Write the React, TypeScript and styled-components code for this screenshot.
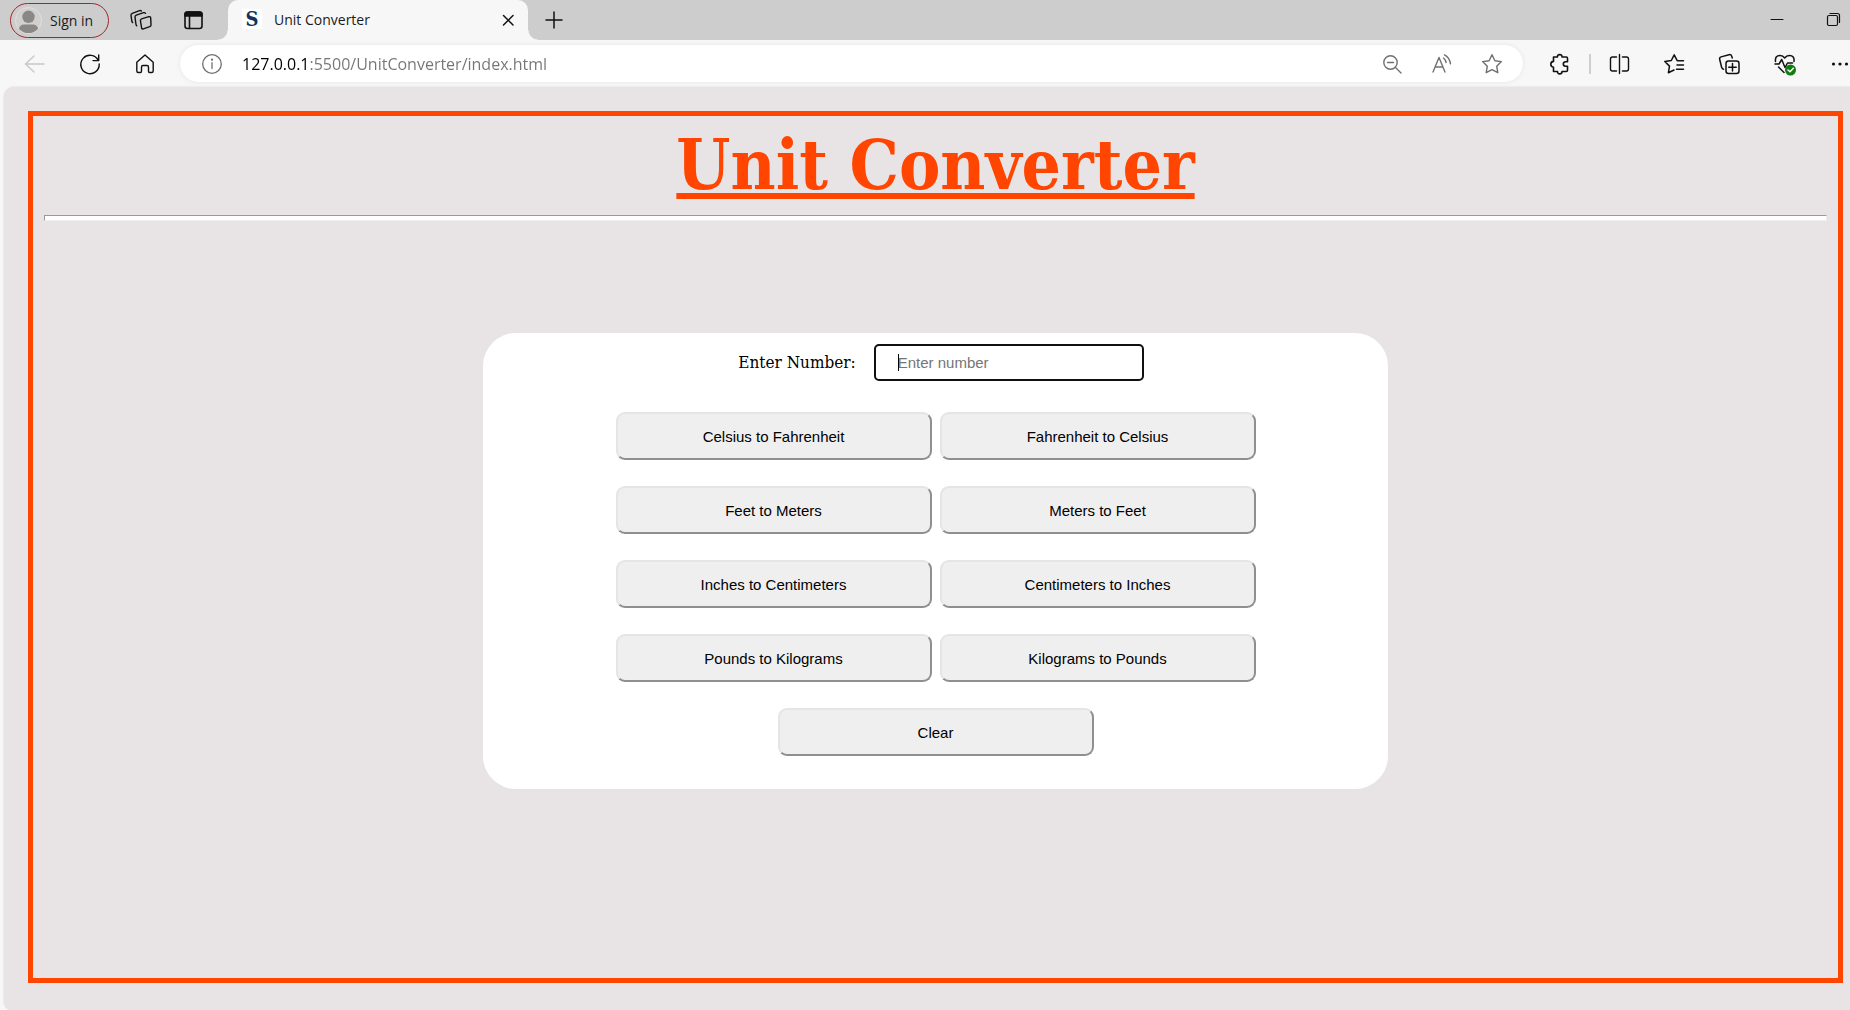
import React, { useState } from "react";
import styled, { createGlobalStyle } from "styled-components";

const GlobalStyle = createGlobalStyle`
  * { box-sizing: border-box; }
  body { margin: 0; background: #f7f7f7; font-family: "Open Sans", "Noto Sans", sans-serif; }
`;

const Browser = styled.div`
  display: flex;
  flex-direction: column;
  min-height: 100vh;
  overflow: hidden;
`;

const TabStrip = styled.header`
  display: flex;
  align-items: center;
  height: 40px;
  padding-left: 10px;
  background: #cdcdcd;
`;

const ProfileButton = styled.button`
  display: flex;
  align-items: center;
  gap: 8px;
  width: 99px;
  height: 35px;
  margin-right: 6px;
  padding: 0 0 0 4px;
  border: 1px solid #a4262c;
  border-radius: 18px;
  background: transparent;
  color: #1b1b1b;
  font-family: inherit;
  font-size: 14px;
  white-space: nowrap;
`;

const IconButton = styled.button<{ $width: number; $tone?: string; $end?: number }>`
  display: flex;
  flex: none;
  align-items: center;
  justify-content: ${(p) => (p.$end === undefined ? "center" : "flex-end")};
  width: ${(p) => p.$width}px;
  height: 36px;
  padding: 0 ${(p) => p.$end ?? 0}px 0 0;
  border: 0;
  background: transparent;
  color: ${(p) => p.$tone ?? "#111"};
`;

const Tab = styled.div`
  position: relative;
  display: flex;
  align-items: center;
  width: 300px;
  height: 40px;
  margin-left: 9px;
  padding: 0 8px 2px 14px;
  border-radius: 10px 10px 0 0;
  background: #f7f7f7;
  color: #1b1b1b;
  font-size: 14px;

  &::before,
  &::after {
    content: "";
    position: absolute;
    bottom: 0;
    width: 10px;
    height: 10px;
  }
  &::before {
    right: 100%;
    background: radial-gradient(circle at 0 0, #cdcdcd 9px, #f7f7f7 10px);
  }
  &::after {
    left: 100%;
    background: radial-gradient(circle at 100% 0, #cdcdcd 9px, #f7f7f7 10px);
  }
`;

const Favicon = styled.span`
  width: 20px;
  height: 20px;
  margin-right: 12px;
  background: #fff;
  color: #12355b;
  font: bold 20px/20px "DejaVu Serif Condensed", "DejaVu Serif", serif;
  text-align: center;
`;

const TabTitle = styled.span`
  flex: 1;
  white-space: nowrap;
`;

const Spacer = styled.div`
  flex: 1;
`;

const Toolbar = styled.nav`
  display: flex;
  align-items: center;
  height: 47px;
  padding-left: 7px;
`;

const AddressBar = styled.div`
  display: flex;
  flex: 1;
  align-items: center;
  height: 37px;
  margin: 0 9px 0 8px;
  padding: 0 6px 0 20px;
  border-radius: 19px;
  background: #fff;
  box-shadow: 0 0 5px rgba(0, 0, 0, 0.08);
  color: #707070;
`;

const AddressInput = styled.input`
  flex: 1;
  min-width: 0;
  height: 30px;
  margin-left: 18px;
  padding: 0;
  border: 0;
  outline: 0;
  background: linear-gradient(to right, #000 67px, #757575 67px);
  background-clip: text;
  -webkit-text-fill-color: transparent;
  font-family: inherit;
  font-size: 16px;
`;

const Divider = styled.span`
  width: 2px;
  height: 20px;
  margin: 0 0 0 2px;
  background: #cfcfcf;
`;

const Page = styled.main`
  display: flex;
  flex: 1;
  flex-direction: column;
  margin-left: 4px;
  padding: 24px 7px 27px 24px;
  border-radius: 10px 0 0 8px;
  background: #e8e4e5;
  box-shadow: 0 0 2px rgba(0, 0, 0, 0.15);
`;

const Frame = styled.div`
  display: flex;
  flex: 1;
  flex-direction: column;
  align-items: center;
  padding: 11px;
  border: 5px solid #ff4500;
`;

const Title = styled.h1`
  margin: 0;
  color: #ff4500;
  font: bold 69px/76px Georgia, "DejaVu Serif Condensed", "DejaVu Serif", serif;
  text-decoration: underline;
  text-decoration-thickness: 6px;
  text-underline-offset: 4px;
  text-decoration-skip-ink: none;
`;

const Rule = styled.hr`
  align-self: stretch;
  height: 6px;
  margin: 12px 0 112px;
  border: 1px solid #eee;
  border-top-color: #999;
  border-left-color: #999;
  background: #fff;
`;

const Card = styled.form`
  display: flex;
  flex-direction: column;
  align-items: center;
  width: 100%;
  max-width: 905px;
  padding: 11px 0 33px;
  border-radius: 33px;
  background: #fff;
`;

const Field = styled.div`
  display: flex;
  align-items: center;
  gap: 18px;
  margin-bottom: 31px;
  padding-left: 11px;
`;

const FieldLabel = styled.label`
  padding-bottom: 2px;
  color: #000;
  font: 17px/24px Georgia, "DejaVu Serif Condensed", "DejaVu Serif", serif;
`;

const InputWrap = styled.div<{ $caret: boolean }>`
  position: relative;
  display: flex;

  &::after {
    content: "";
    position: absolute;
    top: 10px;
    left: 24px;
    width: 1px;
    height: 17px;
    background: ${(p) => (p.$caret ? "#000" : "transparent")};
  }
`;

const NumberInput = styled.input`
  width: 270px;
  height: 37px;
  padding: 0 22px;
  border: 2px solid #101010;
  border-radius: 5px;
  outline: 0;
  background: #fff;
  font: 15px "Liberation Sans", Arial, sans-serif;

  &::placeholder {
    color: #757575;
  }
`;

const Buttons = styled.div`
  display: flex;
  flex-wrap: wrap;
  justify-content: center;
  gap: 26px 8px;
  max-width: 640px;
`;

const ConvertButton = styled.button`
  width: 316px;
  height: 48px;
  border: 2px solid;
  border-color: #e5e5e5 #8f8f8f #8f8f8f #e5e5e5;
  border-radius: 9px;
  background: #efefef;
  color: #000;
  font: 15px "Liberation Sans", Arial, sans-serif;
`;

const Svg = ({ children, size = 24, width = 1.4 }: { children: React.ReactNode; size?: number; width?: number }) => (
  <svg
    width={size}
    height={size}
    viewBox={`0 0 ${size} ${size}`}
    fill="none"
    stroke="currentColor"
    strokeWidth={width}
    strokeLinecap="round"
    strokeLinejoin="round"
    aria-hidden="true"
  >
    {children}
  </svg>
);

const Avatar = () => (
  <svg width="27" height="27" viewBox="0 0 27 27" aria-hidden="true">
    <defs>
      <clipPath id="avatarClip">
        <circle cx="13.500" cy="13.500" r="12.600" />
      </clipPath>
    </defs>
    <circle cx="13.500" cy="13.500" r="13" fill="#d2d0ce" stroke="#e2e0de" />
    <g clipPath="url(#avatarClip)" fill="#8a8886">
      <circle cx="13.500" cy="9.800" r="6.200" />
      <path d="M3.500 22.500Q5 17.500 9 17.500h9q4 0 5.500 5L20 27H7z" />
    </g>
  </svg>
);

const starPath = "M12 2.700l2.900 6 6.500.9-4.700 4.600 1.100 6.500-5.800-3.100-5.800 3.100 1.100-6.500L2.600 9.600l6.500-.9z";

const conversions = [
  "Celsius to Fahrenheit",
  "Fahrenheit to Celsius",
  "Feet to Meters",
  "Meters to Feet",
  "Inches to Centimeters",
  "Centimeters to Inches",
  "Pounds to Kilograms",
  "Kilograms to Pounds",
  "Clear",
];

export default function App() {
  const [value, setValue] = useState("");

  return (
    <Browser>
      <GlobalStyle />
      <TabStrip>
        <ProfileButton>
          <Avatar />
          Sign in
        </ProfileButton>
        <IconButton $width={52} aria-label="Workspaces">
          <Svg>
            <path d="M12.600 10.900l7.300-2.200q1.700-.4 1.800 1.200l.3 7q0 1.300-1.300 1.700l-6.300 2.300q-1.600.5-1.800-1l-1.200-7.200q-.1-1.400 1.200-1.800z" />
            <path d="M7.700 17.800Q7 17 6.900 16L6 9.200q-.1-1.600 1.300-2.100l7.200-2.400q1.300-.4 2 .6" />
            <path d="M3.700 14.600Q3 14 2.800 13L2 7.300q-.1-1.500 1.300-2l7.200-2.600q1.100-.4 1.900.3" />
          </Svg>
        </IconButton>
        <IconButton $width={52} aria-label="Tab actions">
          <Svg width={1.6}>
            <rect x="4" y="4" width="17" height="16.500" rx="2.500" />
            <path d="M4 8V6.500Q4 4 6.500 4h12Q21 4 21 6.500V8z" fill="currentColor" />
            <path d="M8.500 8v12" />
          </Svg>
        </IconButton>
        <Tab>
          <Favicon>S</Favicon>
          <TabTitle>Unit Converter</TabTitle>
          <IconButton $width={24} aria-label="Close tab">
            <Svg width={1.5}>
              <path d="M7.500 8.500l9.500 9.500M17 8.500L7.500 18" />
            </Svg>
          </IconButton>
        </Tab>
        <IconButton $width={52} aria-label="New tab">
          <Svg width={1.5}>
            <path d="M12 4v16M4 12h16" />
          </Svg>
        </IconButton>
        <Spacer />
        <IconButton $width={56} aria-label="Minimize">
          <Svg width={1}>
            <path d="M6 11.500h12" />
          </Svg>
        </IconButton>
        <IconButton $width={45} $end={7} aria-label="Restore">
          <Svg size={20} width={1.2}>
            <rect x="4.500" y="5.500" width="10" height="10" rx="1.500" />
            <path d="M7 3.500h7.500q2 0 2 2V12.500" />
          </Svg>
        </IconButton>
      </TabStrip>

      <Toolbar>
        <IconButton $width={55} $tone="#c8c8c8" aria-label="Back">
          <Svg>
            <path d="M21 12H3M11 4l-8.500 8 8.500 8" />
          </Svg>
        </IconButton>
        <IconButton $width={55} aria-label="Refresh">
          <Svg width={1.4}>
            <path d="M20.300 8.500A9.200 9.200 0 1 0 21.200 12M20.700 3v5.600H15" />
          </Svg>
        </IconButton>
        <IconButton $width={55} aria-label="Home">
          <Svg width={1.4}>
            <path d="M3.800 10.200L12 3l8.200 7.200V19q0 1.500-1.500 1.500h-2q-1.200 0-1.200-1.200V15q0-1.500-1.500-1.500h-4Q8.500 13.500 8.500 15v4.300q0 1.200-1.200 1.200h-2q-1.500 0-1.500-1.500z" />
          </Svg>
        </IconButton>
        <AddressBar>
          <Svg width={1.3}>
            <circle cx="12" cy="12" r="9.300" />
            <path d="M12 10.700V16.500" />
            <circle cx="12" cy="7.700" r=".5" fill="currentColor" />
          </Svg>
          <AddressInput aria-label="Address" defaultValue="127.0.0.1:5500/UnitConverter/index.html" />
          <IconButton $width={50} $tone="#707070" aria-label="Zoom out">
            <Svg>
              <circle cx="10.500" cy="10.500" r="6.700" />
              <path d="M15.500 15.500l5.500 5.500M7.500 10.500h6" />
            </Svg>
          </IconButton>
          <IconButton $width={50} $tone="#707070" aria-label="Read aloud">
            <Svg>
              <path d="M3 20L9 5.500 15 20M5.200 15h7.600M13.500 6q2 1.500 2.600 4.500M14.500 2.800q5 2.500 6 9" />
            </Svg>
          </IconButton>
          <IconButton $width={50} $tone="#707070" aria-label="Favorite">
            <Svg>
              <path d={starPath} />
            </Svg>
          </IconButton>
        </AddressBar>
        <IconButton $width={55} aria-label="Extensions">
          <Svg width={1.6}>
            <path d="M5.500 5h4q-.4-2.400 2.200-2.400T14 5h4.200q1.300 0 1.300 1.300V9.700h-2q-2.200.2-2.200 2.300t2.200 2.300h2v3.900q0 1.300-1.300 1.300H14q0 2.400-2.300 2.400T9.500 19.500h-4V15.200q-2.700-.3-2.700-2.900t2.700-2.900z" />
          </Svg>
        </IconButton>
        <Divider />
        <IconButton $width={55} aria-label="Split screen">
          <Svg>
            <path d="M12.500 2.500v19M9.500 5H5.500Q3.500 5 3.500 7v10q0 2 2 2h4M15.500 5h4q2 0 2 2v10q0 2-2 2h-4" />
          </Svg>
        </IconButton>
        <IconButton $width={55} aria-label="Favorites">
          <Svg width={1.5}>
            <path d="M21.500 8.700h-6.300L12.200 2.800 9.300 8.500l-6.500 1 4.700 4.600-1.100 6.600L12 18M15 13h6.500M14.500 17.200h7" />
          </Svg>
        </IconButton>
        <IconButton $width={55} aria-label="Collections">
          <Svg width={1.5}>
            <rect x="9" y="9" width="13" height="12.500" rx="2.500" />
            <path d="M15.500 11.500v7.500M11.700 15.300h7.500M6.500 17.200Q5 16.800 4.600 15.300L2.700 7.500q-.5-2 1.400-2.600L12 2.700q2-.5 2.600 1.300l.7 2" />
          </Svg>
        </IconButton>
        <IconButton $width={55} aria-label="Browser essentials">
          <Svg width={1.5}>
            <path d="M3.500 9.500Q2.800 3.500 8 3.500q3 0 4.700 2.500 1.700-2.500 4.700-2.500 5.300 0 4.600 6M3 12h4l2.700-4.500 3.300 8 2.500-4.500h5M6.500 15l5.500 5.500" />
            <circle cx="18.500" cy="18" r="5.500" fill="#107c10" stroke="none" />
            <path d="M16 18l2 1.800 3.300-3.500" stroke="#fff" />
          </Svg>
        </IconButton>
        <IconButton $width={39} $end={0} aria-label="Settings and more">
          <Svg size={20}>
            <g fill="currentColor" stroke="none">
              <circle cx="3.500" cy="10" r="1.600" />
              <circle cx="10" cy="10" r="1.600" />
              <circle cx="16.500" cy="10" r="1.600" />
            </g>
          </Svg>
        </IconButton>
      </Toolbar>

      <Page>
        <Frame>
          <Title>Unit Converter</Title>
          <Rule />
          <Card onSubmit={(e) => e.preventDefault()}>
            <Field>
              <FieldLabel htmlFor="number">Enter Number:</FieldLabel>
              <InputWrap $caret={value === ""}>
                <NumberInput
                  id="number"
                  placeholder="Enter number"
                  value={value}
                  onChange={(e) => setValue(e.target.value)}
                />
              </InputWrap>
            </Field>
            <Buttons>
              {conversions.map((name) => (
                <ConvertButton
                  key={name}
                  type="button"
                  onClick={name === "Clear" ? () => setValue("") : undefined}
                >
                  {name}
                </ConvertButton>
              ))}
            </Buttons>
          </Card>
        </Frame>
      </Page>
    </Browser>
  );
}
